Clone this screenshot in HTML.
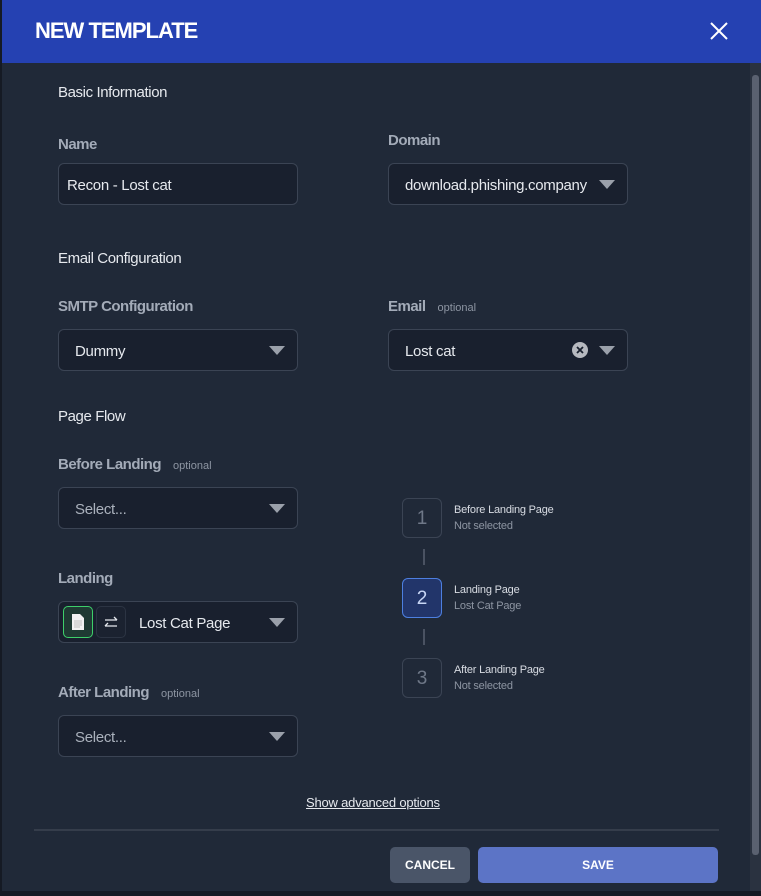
<!DOCTYPE html>
<html><head><meta charset="utf-8"><style>
*{box-sizing:border-box;margin:0;padding:0}
body{width:761px;height:896px;background:#151a24;font-family:"Liberation Sans",sans-serif;overflow:hidden;position:relative}
.modal{position:absolute;left:2px;top:0;width:759px;height:891px;background:#202938}
.hdr{position:absolute;left:0;top:0;width:759px;height:63px;background:#2541b2}
.hdr h1{position:absolute;left:33px;top:18px;color:#fff;font-size:22px;font-weight:bold;letter-spacing:-1px}
.a{position:absolute}
.sec{color:#e6e9ee;font-size:15px;letter-spacing:-0.4px}
.lbl{color:#a3abb8;font-size:15px;font-weight:bold;letter-spacing:-0.5px}
.opt{color:#8d95a2;font-size:11px;font-weight:normal;margin-left:12px;letter-spacing:0}
.inp{position:absolute;width:240px;height:42px;background:#19202e;border:1px solid #3b4454;border-radius:6px;color:#e6e9ee;font-size:15px;line-height:43px;padding-left:16px;letter-spacing:-0.3px}
.tri{position:absolute;right:12px;top:16px;width:0;height:0;border-left:8px solid transparent;border-right:8px solid transparent;border-top:9px solid #9aa0aa}
.step{position:absolute;left:400px;width:40px;height:40px;border:1px solid #3b4454;border-radius:6px;color:#6f7888;font-size:19px;text-align:center;line-height:40px}
.st{position:absolute;left:452px;font-size:11px;color:#d8dce3;line-height:16px;letter-spacing:-0.2px}
.st span{color:#8d95a2;display:block}
.vl{position:absolute;left:421px;width:2px;height:16px;background:#4a5262}
</style></head><body>
<div class="modal">
<div class="hdr"><h1>NEW TEMPLATE</h1>
<svg class="a" style="left:708px;top:22px" width="18" height="18" viewBox="0 0 18 18"><path d="M1 1L17 17M17 1L1 17" stroke="#fff" stroke-width="2"/></svg></div>
<div class="a" style="left:748px;top:63px;width:11px;height:828px;background:#2a3240"></div>
<div class="a" style="left:750px;top:75px;width:7px;height:780px;background:#5a6170;border-radius:3px"></div>

<div class="a sec" style="left:56px;top:84px">Basic Information</div>
<div class="a lbl" style="left:56px;top:136px">Name</div>
<div class="a lbl" style="left:386px;top:132px">Domain</div>
<div class="inp" style="left:56px;top:163px;padding-left:8px">Recon - Lost cat</div>
<div class="inp" style="left:386px;top:163px;white-space:nowrap;overflow:hidden"><div style="width:184px;overflow:hidden">download.phishing.company</div><div class="tri"></div></div>

<div class="a sec" style="left:56px;top:250px">Email Configuration</div>
<div class="a lbl" style="left:56px;top:298px">SMTP Configuration</div>
<div class="a lbl" style="left:386px;top:298px">Email<span class="opt">optional</span></div>
<div class="inp" style="left:56px;top:329px">Dummy<div class="tri"></div></div>
<div class="inp" style="left:386px;top:329px">Lost cat
<div class="a" style="left:183px;top:12px;width:16px;height:16px;border-radius:50%;background:#b6b9bf"><svg style="position:absolute;left:4px;top:4px" width="8" height="8"><path d="M1 1L7 7M7 1L1 7" stroke="#19202e" stroke-width="1.8"/></svg></div><div class="tri"></div></div>

<div class="a sec" style="left:56px;top:408px">Page Flow</div>
<div class="a lbl" style="left:56px;top:456px">Before Landing<span class="opt">optional</span></div>
<div class="inp" style="left:56px;top:487px;color:#aab1bc">Select...<div class="tri"></div></div>
<div class="a lbl" style="left:56px;top:570px">Landing</div>
<div class="inp" style="left:56px;top:601px;padding-left:80px">Lost Cat Page
<div class="a" style="left:4px;top:4px;width:30px;height:32px;border:1px solid #3ecf6a;border-radius:5px;background:#1f3a33"><svg style="position:absolute;left:7px;top:6px" width="14" height="18" viewBox="0 0 14 18"><path d="M1 1H9L13 5V17H1Z" fill="#f2f2f2"/><path d="M3 8H11M3 10H11M3 12H11M3 14H9" stroke="#b0b0b0" stroke-width="0.8"/></svg></div>
<div class="a" style="left:37px;top:4px;width:30px;height:32px;border:1px solid #2c3443;border-radius:5px;background:#1b2230"><svg style="position:absolute;left:6px;top:8px" width="16" height="16" viewBox="0 0 16 16"><path d="M2 5H14M11 2L14 5M14 11H2M5 8L2 11" stroke="#e6e9ee" stroke-width="1.3" fill="none"/></svg></div>
<div class="tri"></div></div>
<div class="a lbl" style="left:56px;top:684px">After Landing<span class="opt">optional</span></div>
<div class="inp" style="left:56px;top:715px;color:#aab1bc">Select...<div class="tri"></div></div>

<div class="step" style="top:498px">1</div>
<div class="st" style="top:502px">Before Landing Page<span>Not selected</span></div>
<div class="vl" style="top:549px"></div>
<div class="step" style="top:578px;border-color:#4d7fe0;background:#22356a;color:#c8d6f5">2</div>
<div class="st" style="top:582px">Landing Page<span>Lost Cat Page</span></div>
<div class="vl" style="top:629px"></div>
<div class="step" style="top:658px">3</div>
<div class="st" style="top:662px">After Landing Page<span>Not selected</span></div>

<div class="a" style="left:304px;top:795px;color:#e6e9ee;font-size:13px;text-decoration:underline;letter-spacing:-0.2px">Show advanced options</div>
<div class="a" style="left:32px;top:829px;width:685px;height:2px;background:#353d4b"></div>
<div class="a" style="left:388px;top:847px;width:80px;height:36px;background:#4a5568;border-radius:5px;color:#fff;font-size:12px;font-weight:bold;text-align:center;line-height:36px">CANCEL</div>
<div class="a" style="left:476px;top:847px;width:240px;height:36px;background:#5c74c6;border-radius:5px;color:#fff;font-size:12px;font-weight:bold;text-align:center;line-height:36px">SAVE</div>
</div>
</body></html>
